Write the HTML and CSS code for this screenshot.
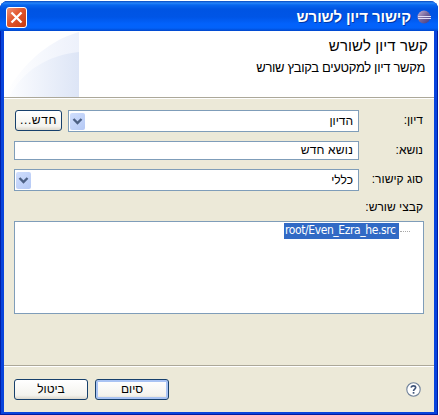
FILE: index.html
```html
<!DOCTYPE html>
<html lang="he" dir="rtl">
<head>
<meta charset="utf-8">
<title>קישור דיון לשורש</title>
<link rel="stylesheet" href="styles.css">
</head>
<body>
<main class="window">
  <header class="titlebar">
    <svg class="logo" width="15" height="14" viewBox="0 0 15 14">
      <defs><linearGradient id="globe" x1="0" y1="0" x2="1" y2="1"><stop offset="0" stop-color="#c9b4d6"/><stop offset=".5" stop-color="#75659a"/><stop offset="1" stop-color="#3d3984"/></linearGradient></defs>
      <circle cx="7" cy="7" r="6.5" fill="url(#globe)"/>
      <path d="M1 6.5h13M1 8.5h13" stroke="#e0dcf5" stroke-width="1"/>
    </svg>
    <h1 class="title">קישור דיון לשורש</h1>
    <button class="close" aria-label="סגור">
      <svg width="19" height="19" viewBox="0 0 19 19"><path d="M4.5 4.5l10 10M14.5 4.5l-10 10" stroke="#fff" stroke-width="2.3"/></svg>
    </button>
  </header>
  <section class="banner">
    <div class="banner-text">
      <h2 class="heading">קשר דיון לשורש</h2>
      <p class="description">מקשר דיון למקטעים בקובץ שורש</p>
    </div>
    <svg class="banner-art" width="75" height="66" viewBox="0 0 75 66">
      <defs>
        <linearGradient id="outer" x1="0" y1="0" x2="1" y2="0"><stop offset="0" stop-color="#fff"/><stop offset="1" stop-color="#edf1fb"/></linearGradient>
        <linearGradient id="inner" x1="0" y1="0" x2="1" y2="0"><stop offset="0" stop-color="#fcfdff"/><stop offset="1" stop-color="#dde5f6"/></linearGradient>
      </defs>
      <path d="M0 66C15 37 42 10 75 1V66Z" fill="url(#outer)"/>
      <path d="M5 66C18 40 44 24 75 21V66Z" fill="url(#inner)"/>
    </svg>
  </section>
  <section class="form">
    <div class="row">
      <span class="label">דיון:</span>
      <div class="field"><span class="value">הדיון</span><i class="drop"><svg width="15" height="17" viewBox="0 0 15 17"><path d="M3.5 6l4 4 4-4" fill="none" stroke="#4d6185" stroke-width="2.4"/></svg></i></div>
      <button class="button new"><span>חדש...</span></button>
    </div>
    <div class="row row-subject">
      <span class="label">נושא:</span>
      <div class="field"><span class="value value-subject">נושא חדש</span></div>
    </div>
    <div class="row">
      <span class="label">סוג קישור:</span>
      <div class="field"><span class="value">כללי</span><i class="drop"><svg width="15" height="17" viewBox="0 0 15 17"><path d="M3.5 6l4 4 4-4" fill="none" stroke="#4d6185" stroke-width="2.4"/></svg></i></div>
    </div>
    <div class="label-files">קבצי שורש:</div>
    <div class="tree"><i class="branch"></i><span class="selected" dir="ltr">root/Even_Ezra_he.src</span></div>
  </section>
  <footer class="footer">
    <svg class="help" width="15" height="15" viewBox="0 0 15 15"><circle cx="7.5" cy="7.5" r="6.7" fill="#fff" stroke="#71839b" stroke-width="1.1"/><path d="M5.2 5.6C5.3 3.4 9.6 3.3 9.7 5.6C9.7 7 7.5 7.2 7.5 9" fill="none" stroke="#3f5478" stroke-width="1.6"/><path d="M6.7 10h1.7v1.7H6.7z" fill="#3f5478"/></svg>
    <button class="button action default"><span>סיום</span></button>
    <button class="button action"><span>ביטול</span></button>
  </footer>
</main>
</body>
</html>
```
FILE: styles.css
```css
* { box-sizing: border-box; }
body { margin: 0; padding-top: 1px; background: #fff; direction: ltr; overflow: hidden; }
.window {
  direction: rtl;
  width: 438px;
  height: 414px;
  display: flex;
  flex-direction: column;
  background: #0844dc;
  border-radius: 8px 8px 0 0;
  padding: 0 4px 3px;
  box-shadow: inset 1px 0 #001fa8, inset -1px -1px #001ba0;
  font: 12px "Liberation Sans", Arial, sans-serif;
  color: #000;
  white-space: nowrap;
}
.titlebar {
  height: 30px;
  flex: none;
  margin: 0 -4px;
  padding: 2px 6px 0 6px;
  border-radius: 8px 8px 0 0;
  display: flex;
  align-items: center;
  background: linear-gradient(#0948bd 0, #2585fa 2px, #0866ee 4px, #0054e3 8px, #0055e6 16px, #0262fc 23px, #0262fa 27px, #0047cc 30px);
}
.logo { flex: none; }
.title { margin: 0 6px 0 auto; font-size: 15px; line-height: 20px; color: #fff; letter-spacing: -0.1px; text-shadow: 1px 1px #0038a5; }
.close { width: 21px; height: 21px; padding: 0; border: 1px solid #fff; border-radius: 3px; background: linear-gradient(135deg, #ef9276, #e1552c 45%, #c73b10); }
.close svg { display: block; }
.banner { height: 66px; flex: none; background: #fff; display: flex; justify-content: space-between; }
.banner-text { padding: 5px 6px 0 0; }
.heading { margin: 0; font-size: 15px; line-height: 20px; font-weight: 400; letter-spacing: 0.1px; }
.description { margin: 3px 3px 0 0; font-size: 13px; line-height: 18px; letter-spacing: -0.33px; }
.form { height: 268px; flex: none; border-top: 1px solid #aca899; box-shadow: inset 0 1px #fff; background: #ece9d8; padding: 12px 10px 0; }
.row { display: flex; height: 22px; margin-bottom: 9px; align-items: stretch; }
.row-subject { height: 19px; }
.label { width: 65px; flex: none; padding-right: 1px; line-height: 21px; }
.row-subject .label { line-height: 18px; }
.field { flex: 1; border: 1px solid #7f9db9; background: #fff; padding: 0 5px 0 1px; line-height: 19px; display: flex; justify-content: space-between; align-items: center; }
.value-subject { letter-spacing: 0.2px; }
.drop { width: 15px; height: 17px; border-radius: 2px; background: linear-gradient(135deg, #d0defd, #b5c9f5); }
.drop svg { display: block; }
.button { border: 1px solid #17406c; border-radius: 3px; background: linear-gradient(#fff, #f4f3ee 80%, #dcd8cd); font: inherit; color: #000; padding: 0; height: 21px; line-height: 19px; }
.new { width: 47px; margin: 0 6px 0 1px; letter-spacing: 0.6px; }
.label-files { line-height: 15px; height: 21px; padding-right: 1px; }
.tree { height: 93px; border: 1px solid #7f9db9; background: #fff; padding: 1px 13px; display: flex; align-items: flex-start; }
.branch { width: 10px; height: 9px; margin-left: 1px; border-bottom: 1px dotted #aaa; }
.selected { width: 115px; flex: none; height: 16px; background: #316ac5; color: #fff; padding-left: 1px; font: 12px/15px "DejaVu Sans Condensed", "DejaVu Sans", sans-serif; font-stretch: condensed; letter-spacing: -0.4px; }
.footer { flex: 1; border-top: 1px solid #aca899; box-shadow: inset 0 1px #fff; background: #ece9d8; display: flex; align-items: flex-start; padding: 13px 13px 0 10px; }
.help { margin: 3px 0 0 auto; }
.action { width: 74px; margin-right: 7px; }
.default { box-shadow: inset 0 0 0 2px #a9c3f3; }
```
